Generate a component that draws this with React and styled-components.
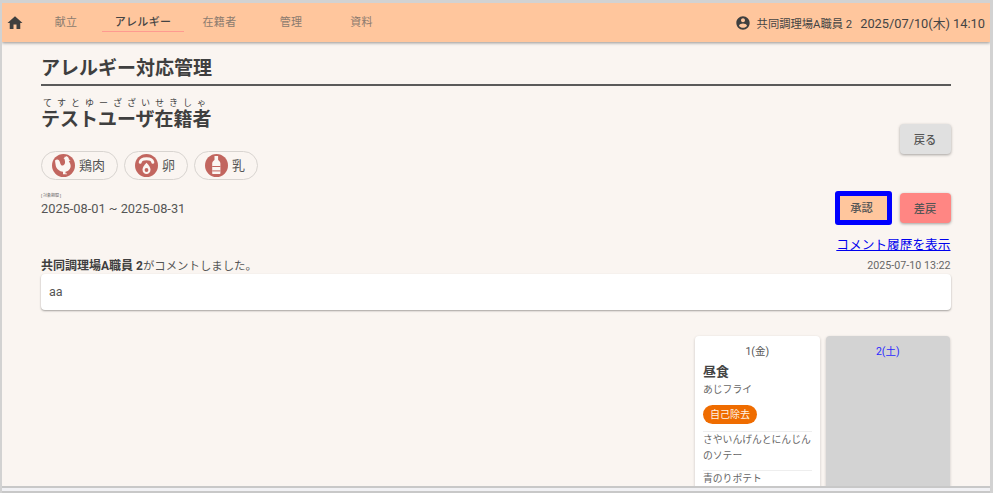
import React from "react";
import styled, { createGlobalStyle } from "styled-components";

const GlobalStyle = createGlobalStyle`
  html, body {
    margin: 0;
    padding: 0;
    width: 993px;
    height: 493px;
    overflow: hidden;
    background: #fff;
    font-family: Roboto, "Noto Sans CJK JP", sans-serif;
    color: #3f3f3f;
  }
`;

const Frame = styled.div`
  width: 993px;
  height: 493px;
  box-sizing: border-box;
  border: 3px solid #d2d2d2;
  border-left-width: 2px;
  border-bottom: 0;
  background: #faf5f1;
  display: flex;
  flex-direction: column;
  overflow: hidden;
  position: relative;

  &::after {
    content: "";
    position: absolute;
    left: 0;
    right: 0;
    bottom: 0;
    height: 7px;
    background: #f1f1f4;
    border-top: 2px solid #c8c8c8;
    border-bottom: 2px solid #c8c8c8;
    box-sizing: border-box;
  }
`;

const Header = styled.header`
  height: 39px;
  flex: none;
  display: flex;
  align-items: center;
  background: #ffc69d;
  box-shadow: 0 1px 3px rgba(0, 0, 0, 0.4);
  position: relative;
  z-index: 1;
  padding: 0 5px 0 4px;
`;

const HomeButton = styled.div`
  width: 18px;
  height: 18px;
  flex: none;
`;

const Menu = styled.nav`
  display: flex;
  align-items: center;
  margin-left: 6px;
`;

const MenuItem = styled.div`
  width: ${(p) => p.$width}px;
  height: 21px;
  margin-bottom: 2px;
  line-height: 24px;
  text-align: center;
  font-size: 11px;
  letter-spacing: 0.3px;
  font-weight: ${(p) => (p.$active ? 500 : 400)};
  color: ${(p) => (p.$active ? "#444" : "#8c7b6f")};
  border-bottom: 1px solid ${(p) => (p.$active ? "#ff9a90" : "transparent")};
  box-sizing: border-box;
`;

const HeaderInfo = styled.div`
  margin-left: auto;
  display: flex;
  align-items: center;
  color: #444;
`;

const UserName = styled.span`
  font-size: 11.3px;
  margin-left: 6px;
`;

const Clock = styled.span`
  font-size: 12.8px;
  margin-left: 8px;
`;

const Main = styled.main`
  flex: 1;
  min-height: 0;
  padding: 12px 39.5px 0 39px;
  display: flex;
  flex-direction: column;
`;

const PageTitle = styled.h1`
  margin: 0;
  font-size: 19px;
  line-height: 30px;
  font-weight: 700;
  color: #3f3f3f;
  border-bottom: 2px solid #5a5a5a;
`;

const PersonRow = styled.div`
  display: flex;
  justify-content: space-between;
  align-items: flex-end;
  margin-top: 12px;
`;

const PersonColumn = styled.div`
  display: flex;
  flex-direction: column;
`;

const Furigana = styled.div`
  font-size: 9px;
  line-height: 11px;
  letter-spacing: 5px;
  color: #444;
  padding-left: 2px;
`;

const PersonName = styled.div`
  font-size: 19px;
  line-height: 24px;
  font-weight: 700;
  margin-top: -1px;
`;

const Chips = styled.div`
  display: flex;
  gap: 6px;
  margin-top: 19px;
`;

const Chip = styled.div`
  height: 29px;
  box-sizing: border-box;
  border: 1px solid #d8d4d0;
  border-radius: 15px;
  padding: 0 12px 0 10px;
  display: flex;
  align-items: center;
  gap: 4px;
  font-size: 13px;
  color: #555;

  span {
    margin-bottom: 2px;
  }
`;

const Button = styled.div`
  width: 51px;
  height: 30px;
  box-sizing: border-box;
  border-radius: 4px;
  padding-bottom: 1px;
  display: flex;
  align-items: center;
  justify-content: center;
  font-size: 11.3px;
  font-weight: 500;
  color: #555;
  background: #e0e0e0;
  box-shadow: 0 1px 3px rgba(0, 0, 0, 0.35);
`;

const BackButton = styled(Button)`
  margin-bottom: 26px;
`;

const ApproveButton = styled(Button)`
  width: 57px;
  height: 34px;
  border: 5px solid #0000ff;
  border-radius: 3px;
  padding: 0 3px 3px 0;
  background: #ffc69d;
  box-shadow: none;
`;

const RejectButton = styled(Button)`
  background: #ff8683;
`;

const PeriodRow = styled.div`
  display: flex;
  justify-content: space-between;
  align-items: flex-start;
  margin-top: 11px;
`;

const Period = styled.div`
  display: flex;
  flex-direction: column;
  margin-top: 2px;
`;

const PeriodLabel = styled.div`
  font-size: 4px;
  line-height: 6px;
  color: #666;
`;

const PeriodValue = styled.div`
  font-size: 12.8px;
  line-height: 17px;
  margin-top: 1px;
  color: #555;
`;

const Actions = styled.div`
  display: flex;
  align-items: center;
  gap: 8px;
`;

const HistoryLink = styled.a`
  align-self: flex-end;
  font-size: 12.7px;
  line-height: 18px;
  color: #0000ee;
  margin-top: 11px;
`;

const CommentHead = styled.div`
  display: flex;
  justify-content: space-between;
  align-items: center;
  height: 15px;
  margin-top: 4px;
`;

const CommentAuthor = styled.div`
  font-size: 11.4px;
  color: #555;
  margin-bottom: 3px;

  b {
    font-size: 12px;
    color: #3f3f3f;
  }
`;

const CommentDate = styled.div`
  font-size: 10.7px;
  color: #666;
`;

const CommentBox = styled.div`
  margin-top: 1px;
  height: 36px;
  flex: none;
  box-sizing: border-box;
  padding: 0 8px 2px;
  display: flex;
  align-items: center;
  background: #fff;
  border-radius: 4px;
  box-shadow: 0 1px 2px rgba(0, 0, 0, 0.35);
  font-size: 12.5px;
  color: #555;
`;

const Calendar = styled.div`
  display: flex;
  justify-content: flex-end;
  gap: 6px;
  margin-top: 26px;
  padding-right: 0.5px;
  flex: 1;
  min-height: 0;
`;

const DayCard = styled.div`
  width: 124.5px;
  box-sizing: border-box;
  padding: 9px 8px 0;
  border-radius: 4px 4px 0 0;
  background: ${(p) => (p.$off ? "#d3d3d3" : "#fff")};
  box-shadow: 0 1px 3px rgba(0, 0, 0, 0.2);
  overflow: hidden;
`;

const DayLabel = styled.div`
  text-align: center;
  font-size: 10.5px;
  line-height: 13px;
  color: ${(p) => (p.$saturday ? "#2a2aff" : "#555")};
`;

const MealName = styled.div`
  font-size: 13px;
  line-height: 18px;
  font-weight: 700;
  margin-top: 5px;
  color: #444;
`;

const MainDish = styled.div`
  font-size: 9.8px;
  line-height: 17px;
  color: #666;
`;

const Dish = styled.div`
  font-size: 9.8px;
  line-height: 16px;
  color: #666;
  border-top: 1px solid #eee;
  padding-bottom: 6px;
`;

const Badge = styled.div`
  width: fit-content;
  margin: 7px 0;
  height: 19px;
  line-height: 19px;
  padding: 0 7px;
  border-radius: 10px;
  background: #ef6c00;
  color: #fff3e6;
  font-size: 10px;
`;

const MENU = [
  { label: "献立", width: 72 },
  { label: "アレルギー", width: 82, active: true },
  { label: "在籍者", width: 71 },
  { label: "管理", width: 72 },
  { label: "資料", width: 69 },
];

const HomeIcon = () => (
  <svg width="18" height="18" viewBox="0 0 24 24" fill="#3f3f3f">
    <path d="M10 20v-6h4v6h5v-8h3L12 3 2 12h3v8z" />
  </svg>
);

const UserIcon = () => (
  <svg width="16" height="16" viewBox="0 0 24 24" fill="#3f3f3f">
    <path d="M12 2C6.48 2 2 6.48 2 12s4.48 10 10 10 10-4.48 10-10S17.52 2 12 2zm0 3c1.66 0 3 1.34 3 3s-1.34 3-3 3-3-1.34-3-3 1.34-3 3-3zm0 14.2c-2.5 0-4.71-1.28-6-3.22.03-1.99 4-3.08 6-3.08 1.99 0 5.97 1.09 6 3.08-1.29 1.94-3.5 3.22-6 3.22z" />
  </svg>
);

const ChickenIcon = () => (
  <svg width="23" height="23" viewBox="0 0 23 23">
    <circle cx="11.5" cy="11.5" r="11.5" fill="#c2665f" />
    <path
      fill="#fbf6f2"
      d="M3 6.500C5 4.500 7.500 5.500 8 8.500C8.400 10.800 9.800 12 11 11.500C12.800 10.800 13.200 9 13 7.500C12.900 6.500 12.500 5.500 12.500 5L11.500 4.500L12.500 3.800L12.500 2.800L13.700 2.800L14.300 2L15.200 2.800L16.200 2.800L16.200 3.800L17 4.500L16.500 5L18.500 6.500L16.800 7C17.800 9 19 10.500 18.600 13C18.100 15.700 15.700 17.400 13.500 17.700V19.500H15V20.300H11V17.800C7.500 17.400 4.400 15 3.800 12C3.400 10 3.200 8 3 6.500Z"
    />
  </svg>
);

const EggIcon = () => (
  <svg width="23" height="23" viewBox="0 0 23 23">
    <circle cx="11.5" cy="11.5" r="11.5" fill="#c2665f" />
    <path
      d="M5.200 8.200C6 3.600 17 3.600 17.800 8.200"
      fill="none"
      stroke="#fbf6f2"
      strokeWidth="3"
      strokeLinecap="round"
    />
    <path
      fill="#fbf6f2"
      d="M11.500 8.800c2.300 2.300 4 4.700 4 7 0 2.400-1.800 4.200-4 4.200s-4-1.800-4-4.200c0-2.300 1.700-4.700 4-7z"
    />
    <circle cx="11.500" cy="16" r="1.900" fill="#c2665f" />
  </svg>
);

const MilkIcon = () => (
  <svg width="23" height="23" viewBox="0 0 23 23">
    <circle cx="11.500" cy="11.500" r="11.500" fill="#c2665f" />
    <path
      fill="#fbf6f2"
      d="M9.500 2h3.600v3.800c0 .8 2.300 1.400 2.300 3.400v10c0 .5-.4.900-.9.900H8.100c-.5 0-.9-.4-.9-.9v-10c0-2 2.300-2.600 2.300-3.400z"
    />
    <rect x="7.200" y="12" width="8.200" height="1" fill="#c2665f" />
    <rect x="7.200" y="16.400" width="8.200" height="1" fill="#c2665f" />
  </svg>
);

const ALLERGENS = [
  { name: "鶏肉", Icon: ChickenIcon },
  { name: "卵", Icon: EggIcon },
  { name: "乳", Icon: MilkIcon },
];

export default function App() {
  return (
    <>
      <GlobalStyle />
      <Frame>
        <Header>
          <HomeButton>
            <HomeIcon />
          </HomeButton>
          <Menu>
            {MENU.map((item) => (
              <MenuItem key={item.label} $width={item.width} $active={item.active}>
                {item.label}
              </MenuItem>
            ))}
          </Menu>
          <HeaderInfo>
            <UserIcon />
            <UserName>共同調理場A職員 2</UserName>
            <Clock>2025/07/10(木) 14:10</Clock>
          </HeaderInfo>
        </Header>

        <Main>
          <PageTitle>アレルギー対応管理</PageTitle>

          <PersonRow>
            <PersonColumn>
              <Furigana>てすとゆーざざいせきしゃ</Furigana>
              <PersonName>テストユーザ在籍者</PersonName>
              <Chips>
                {ALLERGENS.map(({ name, Icon }) => (
                  <Chip key={name}>
                    <Icon />
                    <span>{name}</span>
                  </Chip>
                ))}
              </Chips>
            </PersonColumn>
            <BackButton>戻る</BackButton>
          </PersonRow>

          <PeriodRow>
            <Period>
              <PeriodLabel>[ 対象期間 ]</PeriodLabel>
              <PeriodValue>2025-08-01 ~ 2025-08-31</PeriodValue>
            </Period>
            <Actions>
              <ApproveButton>承認</ApproveButton>
              <RejectButton>差戻</RejectButton>
            </Actions>
          </PeriodRow>

          <HistoryLink href="#">コメント履歴を表示</HistoryLink>

          <CommentHead>
            <CommentAuthor>
              <b>共同調理場A職員 2</b>がコメントしました。
            </CommentAuthor>
            <CommentDate>2025-07-10 13:22</CommentDate>
          </CommentHead>
          <CommentBox>aa</CommentBox>

          <Calendar>
            <DayCard>
              <DayLabel>1(金)</DayLabel>
              <MealName>昼食</MealName>
              <MainDish>あじフライ</MainDish>
              <Badge>自己除去</Badge>
              <Dish>さやいんげんとにんじんのソテー</Dish>
              <Dish>青のりポテト</Dish>
            </DayCard>
            <DayCard $off>
              <DayLabel $saturday>2(土)</DayLabel>
            </DayCard>
          </Calendar>
        </Main>
      </Frame>
    </>
  );
}
